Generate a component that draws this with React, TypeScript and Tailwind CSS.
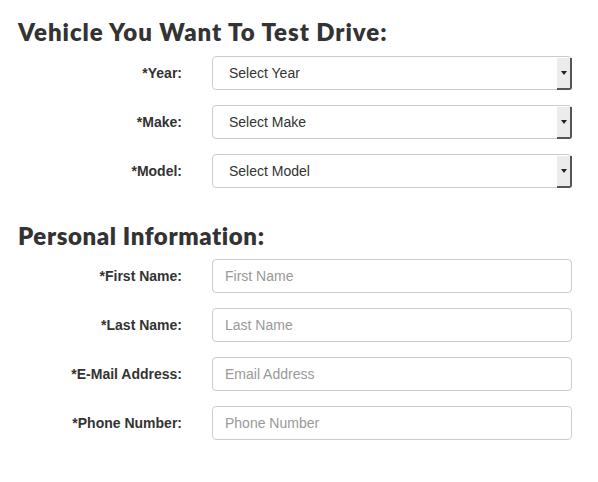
import React from "react";

const labelCls =
  "w-[182px] shrink-0 text-right text-[14px] font-bold text-[#333] font-['Liberation_Sans',Arial,sans-serif]";

const SelectRow = ({ label, text }: { label: string; text: string }) => (
  <div className="flex items-center gap-[30px]">
    <div className={labelCls}>{label}</div>
    <div className="relative flex h-[34px] w-[360px] items-center rounded-[4px] border border-[#ccc] bg-white pl-[16px] text-[14px] text-[#333] font-['Liberation_Sans',Arial,sans-serif]">
      {text}
      <div className="absolute right-[-1px] top-[1px] bottom-[-1px] flex w-[15px] items-center justify-center border-r-2 border-b-2 border-[#555] bg-[#ececec] rounded-br-[3px]">
        <div className="h-0 w-0 border-x-[3px] border-t-[4px] border-x-transparent border-t-[#222]" />
      </div>
    </div>
  </div>
);

const InputRow = ({ label, placeholder }: { label: string; placeholder: string }) => (
  <div className="flex items-center gap-[30px]">
    <div className={labelCls}>{label}</div>
    <input
      placeholder={placeholder}
      className="h-[34px] w-[360px] rounded-[4px] border border-[#ccc] bg-white px-[12px] text-[14px] text-[#333] placeholder:text-[#999] outline-none font-['Liberation_Sans',Arial,sans-serif]"
    />
  </div>
);

const Heading = ({ children, track }: { children: React.ReactNode; track: string }) => (
  <h2
    className={`pl-[18px] text-[24px] leading-[28px] font-extrabold text-[#333] font-['Lato',sans-serif] ${track}`}
  >
    {children}
  </h2>
);

export default function App() {
  return (
    <div className="min-h-screen bg-white pt-[18px]">
      <Heading track="tracking-[0.95px]">Vehicle You Want To Test Drive:</Heading>
      <div className="mt-[10px] flex flex-col gap-[15px]">
        <SelectRow label="*Year:" text="Select Year" />
        <SelectRow label="*Make:" text="Select Make" />
        <SelectRow label="*Model:" text="Select Model" />
      </div>
      <div className="mt-[34px]">
        <Heading track="tracking-[0.6px]">Personal Information:</Heading>
      </div>
      <div className="mt-[9px] flex flex-col gap-[15px]">
        <InputRow label="*First Name:" placeholder="First Name" />
        <InputRow label="*Last Name:" placeholder="Last Name" />
        <InputRow label="*E-Mail Address:" placeholder="Email Address" />
        <InputRow label="*Phone Number:" placeholder="Phone Number" />
      </div>
    </div>
  );
}
